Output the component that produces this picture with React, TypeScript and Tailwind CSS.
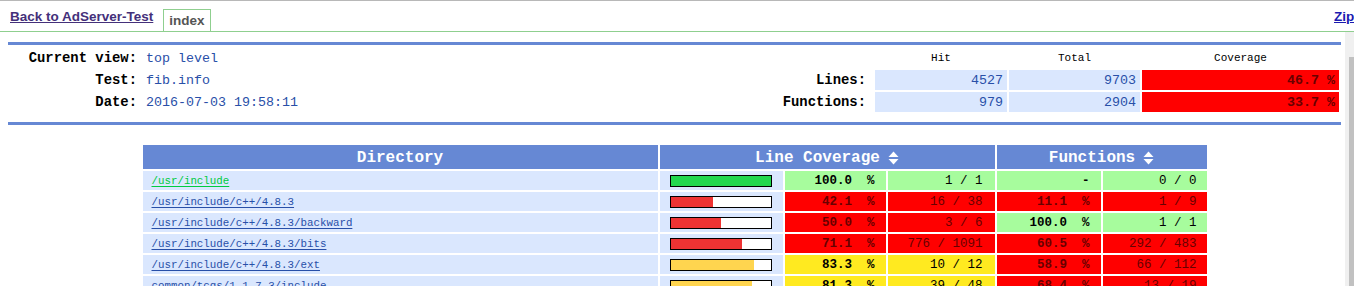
type Level = "hi" | "med" | "lo";

type Row = {
  dir: string;
  visited?: boolean;
  lineHit: number;
  lineTotal: number;
  fnHit: number;
  fnTotal: number;
};

const rows: Row[] = [
  { dir: "/usr/include", visited: true, lineHit: 1, lineTotal: 1, fnHit: 0, fnTotal: 0 },
  { dir: "/usr/include/c++/4.8.3", lineHit: 16, lineTotal: 38, fnHit: 1, fnTotal: 9 },
  { dir: "/usr/include/c++/4.8.3/backward", lineHit: 3, lineTotal: 6, fnHit: 1, fnTotal: 1 },
  { dir: "/usr/include/c++/4.8.3/bits", lineHit: 776, lineTotal: 1091, fnHit: 292, fnTotal: 483 },
  { dir: "/usr/include/c++/4.8.3/ext", lineHit: 10, lineTotal: 12, fnHit: 66, fnTotal: 112 },
  { dir: "common/tcgs/1.1.7.3/include", lineHit: 39, lineTotal: 48, fnHit: 13, fnTotal: 19 },
];

const cellBg: Record<Level, string> = {
  hi: "bg-[#a7fc9d] text-black",
  med: "bg-[#ffea20] text-black",
  lo: "bg-[#ff0000] text-[#680000]",
};

const barBg: Record<Level, string> = {
  hi: "bg-[#22d84e]",
  med: "bg-[#ffd54f]",
  lo: "bg-[#ee3333]",
};

function level(pct: number): Level {
  if (pct >= 90) return "hi";
  if (pct >= 75) return "med";
  return "lo";
}

const mono = "font-['Liberation_Mono',monospace]";

function SortIcon() {
  return (
    <svg width="11" height="14" viewBox="0 0 11 14" className="ml-[8px] inline-block">
      <path d="M5.5 0.5 L10.5 6 L0.5 6 Z" fill="white" />
      <path d="M0.5 8 L10.5 8 L5.5 13.5 Z" fill="white" />
    </svg>
  );
}

function Bar({ pct }: { pct: number }) {
  const lv = level(pct);
  return (
    <div className="flex h-[12px] w-[102px] border border-black bg-white">
      <div className={barBg[lv]} style={{ width: Math.floor(pct) }} />
    </div>
  );
}

function TopNav() {
  return (
    <div className="flex h-[32px] items-end overflow-hidden border-t border-b border-t-[#b8b8b8] border-b-[#8fcf8f] font-['Liberation_Sans',Arial,sans-serif] text-[13.5px] font-bold">
      <a className="mb-[4px] ml-[10px] text-[#44307a] underline">Back to AdServer-Test</a>
      <div className="ml-[10px] flex h-[22px] items-center border border-b-0 border-[#8fcf8f] px-[5px] pt-[2px] text-[#555]">
        index
      </div>
      <a className="mb-[4px] ml-auto w-[20px] whitespace-nowrap text-[#1a1ab0] underline">Zip</a>
    </div>
  );
}

function HeaderInfo() {
  return (
    <div className={`flex justify-between pr-[2px] pt-[3px] text-[13.33px] ${mono}`}>
      <div className="grid grid-cols-[129px_auto] gap-x-[9px] gap-y-[2px]">
        {[
          ["Current view:", "top level"],
          ["Test:", "fib.info"],
          ["Date:", "2016-07-03 19:58:11"],
        ].map(([k, v]) => (
          <div key={k} className="contents">
            <div className="flex h-[20px] items-center justify-end pt-[1px] text-[13.9px] font-bold text-black">{k}</div>
            <div className="flex h-[20px] items-center pt-[1px] text-[#284fa8]">{v}</div>
          </div>
        ))}
      </div>
      <div className="grid grid-cols-[auto_132px_131px_197px] gap-[2px]">
        <div />
        <div className="flex h-[20px] items-center justify-center text-[11px]">Hit</div>
        <div className="flex h-[20px] items-center justify-center text-[11px]">Total</div>
        <div className="flex h-[20px] items-center justify-center text-[11px]">Coverage</div>
        {[
          ["Lines:", 4527, 9703],
          ["Functions:", 979, 2904],
        ].map(([k, hit, total]) => (
          <div key={k as string} className="contents">
            <div className="flex h-[20px] items-center justify-end pr-[7px] pt-[1px] text-[13.9px] font-bold">{k}</div>
            <div className="flex h-[20px] items-center justify-end bg-[#dae7fe] pr-[4px] pt-[1px] text-[#284fa8]">{hit}</div>
            <div className="flex h-[20px] items-center justify-end bg-[#dae7fe] pr-[4px] pt-[1px] text-[#284fa8]">{total}</div>
            <div className="flex h-[20px] items-center justify-end bg-[#ff0000] pr-[4px] pt-[1px] font-bold text-[#680000]">
              {((100 * (hit as number)) / (total as number)).toFixed(1)} %
            </div>
          </div>
        ))}
      </div>
    </div>
  );
}

function CoverageTable() {
  return (
    <div className={`mx-auto mt-[20px] grid w-[1064px] grid-cols-[515px_123px_101px_107px_104px_104px] gap-[2px] ${mono}`}>
      <div className="flex h-[24px] items-center justify-center bg-[#6688d4] pt-[1px] text-[16px] font-bold text-white">
        Directory
      </div>
      <div className="col-span-3 flex h-[24px] items-center justify-center bg-[#6688d4] pt-[1px] text-[16px] font-bold text-white">
        Line Coverage
        <SortIcon />
      </div>
      <div className="col-span-2 flex h-[24px] items-center justify-center bg-[#6688d4] pt-[1px] text-[16px] font-bold text-white">
        Functions
        <SortIcon />
      </div>
      {rows.map((r) => {
        const lp = (100 * r.lineHit) / r.lineTotal;
        const fp = r.fnTotal === 0 ? 100 : (100 * r.fnHit) / r.fnTotal;
        const ll = level(lp);
        const fl = level(fp);
        return (
          <div key={r.dir} className="contents">
            <div className="flex h-[19px] items-center bg-[#dae7fe] pl-[9px] pt-[1px] text-[10.8px]">
              <a className={`underline underline-offset-2 ${r.visited ? "text-[#00cb40]" : "text-[#284fa8]"}`}>
                {r.dir}
              </a>
            </div>
            <div className="flex h-[19px] items-center bg-[#dae7fe] pl-[10px]">
              <Bar pct={lp} />
            </div>
            <div className={`flex h-[19px] items-center justify-end pr-[11px] pt-[1px] text-[12.5px] font-bold whitespace-pre ${cellBg[ll]}`}>
              {lp.toFixed(1)}{"  %"}
            </div>
            <div className={`flex h-[19px] items-center justify-end pr-[12px] pt-[1px] text-[12.5px] whitespace-pre ${cellBg[ll]}`}>
              {r.lineHit} / {r.lineTotal}
            </div>
            <div className={`flex h-[19px] items-center justify-end pr-[11px] pt-[1px] text-[12.5px] font-bold whitespace-pre ${cellBg[fl]}`}>
              {r.fnTotal === 0 ? "-" : `${fp.toFixed(1)}  %`}
            </div>
            <div className={`flex h-[19px] items-center justify-end pr-[10px] pt-[1px] text-[12.5px] whitespace-pre ${cellBg[fl]}`}>
              {r.fnHit} / {r.fnTotal}
            </div>
          </div>
        );
      })}
    </div>
  );
}

export default function App() {
  return (
    <div className="h-[286px] overflow-hidden bg-white text-black">
      <TopNav />
      <div className="flex h-[254px]">
        <div className="w-[1345px] overflow-hidden pl-[8px] pr-[4px] pt-[10px]">
          <div className="h-[3px] bg-[#6688d4]" />
          <HeaderInfo />
          <div className="mt-[10px] h-[3px] bg-[#6688d4]" />
          <CoverageTable />
        </div>
        <div className="flex flex-1 bg-[#f0f0f0]">
          <div className="w-[4px]" />
          <div className="mt-[25px] flex-1 bg-[#c1c1c1]" />
        </div>
      </div>
    </div>
  );
}
